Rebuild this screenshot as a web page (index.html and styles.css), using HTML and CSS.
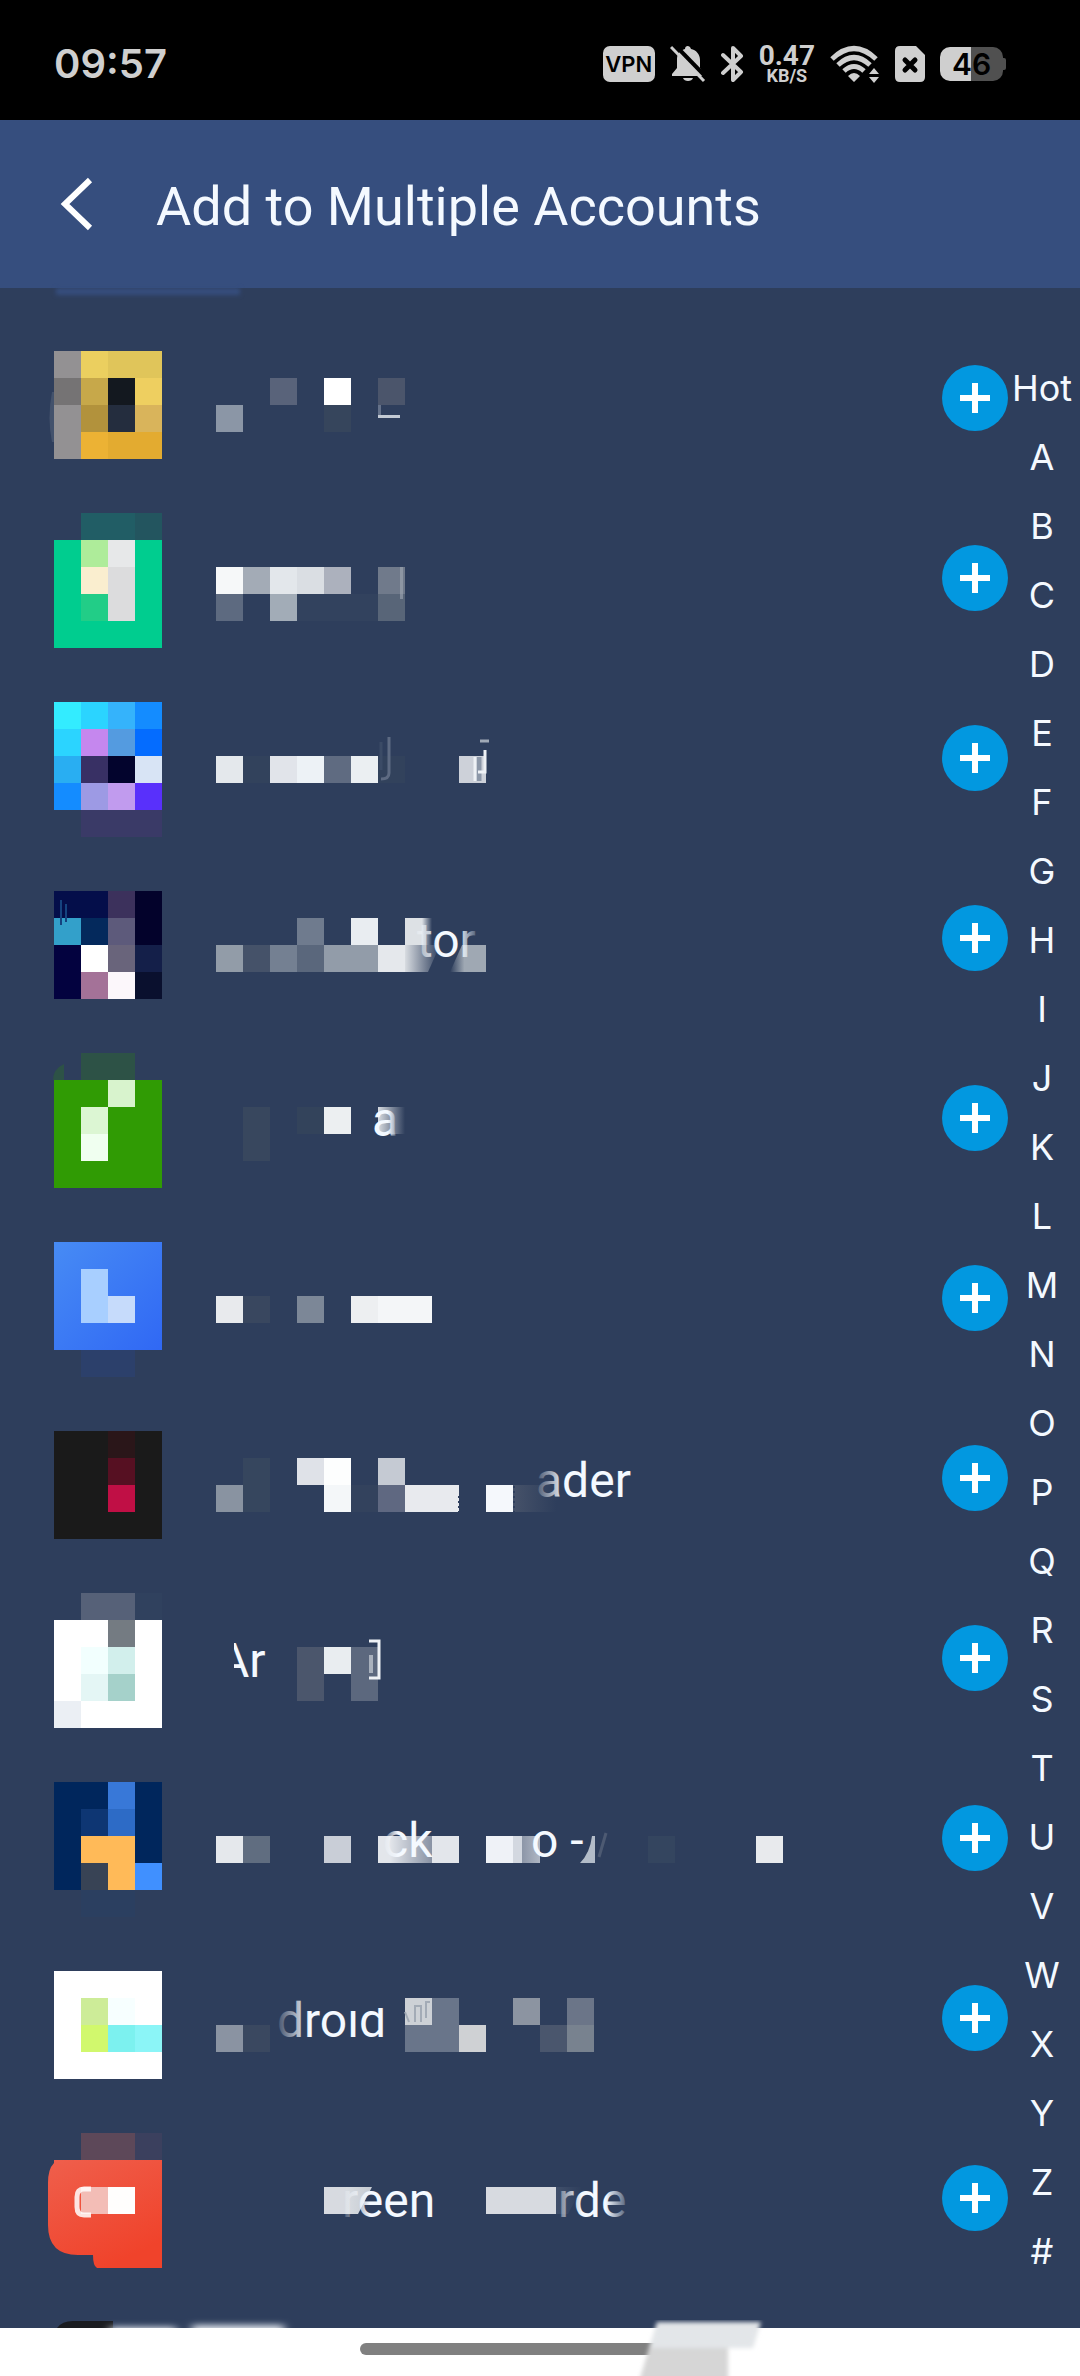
FILE: index.html
```html
<!DOCTYPE html>
<html lang="en">
<head>
<meta charset="utf-8">
<meta name="viewport" content="width=device-width, initial-scale=1">
<title>Add to Multiple Accounts</title>
<link rel="stylesheet" href="styles.css">
</head>
<body>
<svg class="defs" aria-hidden="true">
  <defs>
    <linearGradient id="fade-start"><stop offset="0" stop-color="#f4f9ff" stop-opacity="0.1"/><stop offset="0.3" stop-color="#f4f9ff"/></linearGradient>
    <linearGradient id="fade-end"><stop offset="0.6" stop-color="#f4f9ff"/><stop offset="1" stop-color="#f4f9ff" stop-opacity="0.1"/></linearGradient>
    <linearGradient id="fade-both"><stop offset="0" stop-color="#f4f9ff" stop-opacity="0.3"/><stop offset="0.35" stop-color="#f4f9ff"/><stop offset="0.7" stop-color="#f4f9ff"/><stop offset="1" stop-color="#f4f9ff" stop-opacity="0.2"/></linearGradient>
    <linearGradient id="block-out"><stop offset="0" stop-color="#d8dce1"/><stop offset="1" stop-color="#d8dce1" stop-opacity="0"/></linearGradient>
    <linearGradient id="slate-out"><stop offset="0" stop-color="#465269"/><stop offset="1" stop-color="#465269" stop-opacity="0"/></linearGradient>
    <linearGradient id="grey-in"><stop offset="0" stop-color="#9fa8b3" stop-opacity="0"/><stop offset="0.4" stop-color="#9fa8b3"/></linearGradient>
    <linearGradient id="shade"><stop offset="0" stop-color="#2e3e5c" stop-opacity="0"/><stop offset="0.5" stop-color="#2e3e5c"/><stop offset="1" stop-color="#2e3e5c" stop-opacity="0"/></linearGradient>
    <linearGradient id="coral" x2="0.5" y2="1"><stop offset="0" stop-color="#ef5f4c"/><stop offset="1" stop-color="#f0432b"/></linearGradient>
    <linearGradient id="blue" x2="1" y2="1"><stop offset="0" stop-color="#478bf4"/><stop offset="1" stop-color="#3068f4"/></linearGradient>
    <filter id="soft" x="-20%" y="-100%" width="140%" height="300%"><feGaussianBlur stdDeviation="5 3"/></filter>
    <filter id="edge"><feGaussianBlur stdDeviation="2"/></filter>
    <symbol id="plus" viewBox="0 0 66 66"><path d="M18 33h30M33 18v30" stroke="#fff" stroke-width="6"/></symbol>
  </defs>
</svg>

<header class="status">
  <time class="clock">09:57</time>
  <div class="indicators">
    <span class="vpn">VPN</span>
    <svg width="36" height="38" viewBox="0 0 36 38" aria-label="Muted"><path d="M2 31v-2l5-6V14C7 8 11 5 15 4c0-4 5-4 6 0 5 1 9 5 9 11v8l4 6v2z" fill="#cfcfcf"/><path d="M13 33h10c-1 4-9 4-10 0z" fill="#cfcfcf"/><path d="M5 0l32 33" stroke="#000" stroke-width="4"/><path d="M1 2l33 34" stroke="#cfcfcf" stroke-width="3"/></svg>
    <svg width="23" height="38" viewBox="0 0 23 38" aria-label="Bluetooth"><path d="M2 10l18 17-8 8V3l8 8L2 28" fill="none" stroke="#cfcfcf" stroke-width="4" stroke-linejoin="round" stroke-linecap="round"/></svg>
    <span class="speed"><b>0.47</b><small>KB/S</small></span>
    <svg width="50" height="38" viewBox="0 0 50 38" aria-label="Wi-Fi"><g fill="none" stroke="#cfcfcf" stroke-width="5"><path d="M2 14Q24-7 46 14"/><path d="M8 20Q24 5 40 20"/><path d="M14 26Q24 17 34 26"/></g><path d="M18 31q6-6 12 0l-6 6zM39 29l5-6 5 6zM39 32h10l-5 6z" fill="#cfcfcf"/></svg>
    <svg width="30" height="38" viewBox="0 0 30 38" aria-label="No SIM"><path d="M5 1h16l9 9v22q0 5-5 5H5q-5 0-5-5V6q0-5 5-5z" fill="#cfcfcf"/><path d="M10 15l10 10M20 15L10 25" stroke="#000" stroke-width="5" stroke-linecap="round"/></svg>
    <span class="battery">46</span>
  </div>
</header>

<header class="toolbar">
  <button class="back" aria-label="Back"><svg width="34" height="56" viewBox="0 0 34 56"><path d="M30 4L5 28l25 24" fill="none" stroke="#fff" stroke-width="6"/></svg></button>
  <h1>Add to Multiple Accounts</h1>
</header>

<main class="content">
  <div class="tab-edge"></div>
  <ul class="apps">
    <li class="app">
      <svg class="icon" viewBox="36 308 144 180"><path d="M52 392q-5 26 0 50h2v-50z" fill="#43526c"/><g transform="scale(27)">
        <path d="M2 13h1v4H2z" fill="#939193"/><path d="M2 14h1v1H2z" fill="#757374"/><path d="M3 13h1v1H3z" fill="#ebcf5f"/><path d="M4 13h2v1H4z" fill="#e0c55a"/><path d="M3 14h1v1H3z" fill="#c7a84a"/><path d="M4 14h1v1H4z" fill="#13181f"/><path d="M5 14h1v1H5z" fill="#eecf60"/><path d="M3 15h1v1H3z" fill="#b2923c"/><path d="M4 15h1v1H4z" fill="#242d3e"/><path d="M5 15h1v1H5z" fill="#d9b45b"/><path d="M3 16h1v1H3z" fill="#ecb234"/><path d="M4 16h2v1H4z" fill="#e3ab30"/></g></svg>
      <svg class="name" viewBox="180 308 640 180"><g transform="scale(27)"><path d="M8 15h1v1H8z" fill="#8b96a6"/><path d="M10 14h1v1h-1z" fill="#59637a"/><path d="M12 14h1v1h-1z" fill="#fff"/><path d="M12 15h1v1h-1z" fill="#36455c"/><path d="M14 14h1v1h-1z" fill="#4b556b"/></g><path d="M378 415h22v3h-22z" fill="#c3cad4"/><path d="M378 405h3v10h-3z" fill="#65728a"/></svg>
      <button class="add" aria-label="Add"><svg><use href="#plus"/></svg></button>
    </li>
    <li class="app">
      <svg class="icon" viewBox="36 488 144 180"><g transform="scale(27)"><path d="M3 19h2v1H3z" fill="#215d65"/><path d="M5 19h1v1H5z" fill="#23555f"/><path d="M2 20h4v4H2z" fill="#00cd8f"/><path d="M3 20h1v1H3z" fill="#aeec9a"/><path d="M4 20h1v1H4z" fill="#e7e8e9"/><path d="M3 21h1v1H3z" fill="#faeecf"/><path d="M4 21h1v2H4z" fill="#dcdcdd"/><path d="M3 22h1v1H3z" fill="#22cd87"/></g></svg>
      <svg class="name" viewBox="180 488 640 180"><g transform="scale(27)"><path d="M8 21h1v1H8z" fill="#f6f8f9"/><path d="M9 21h1v1H9z" fill="#a3abb6"/><path d="M10 21h1v1h-1z" fill="#e3e7eb"/><path d="M11 21h1v1h-1z" fill="#dadee3"/><path d="M12 21h1v1h-1z" fill="#acb1bd"/><path d="M14 21h1v1h-1z" fill="#707a8b"/><path d="M8 22h1v1H8z" fill="#5d6a80"/><path d="M10 22h1v1h-1z" fill="#a2acb7"/><path d="M11 22h3v1h-3z" fill="#32425e"/><path d="M14 22h1v1h-1z" fill="#586578"/></g><path d="M400 567h3v32h-3z" fill="#a0a8b4" opacity=".6"/></svg>
      <button class="add" aria-label="Add"><svg><use href="#plus"/></svg></button>
    </li>
    <li class="app">
      <svg class="icon" viewBox="36 668 144 180"><g transform="scale(27)"><path d="M2 26h1v1H2z" fill="#33ecff"/><path d="M3 26h1v1H3zM2 27h1v1H2z" fill="#2bd4ff"/><path d="M4 26h1v1H4z" fill="#35b3fb"/><path d="M5 26h1v1H5zM2 29h1v1H2z" fill="#148cff"/><path d="M3 27h1v1H3z" fill="#c587ee"/><path d="M4 27h1v1H4z" fill="#549be0"/><path d="M5 27h1v1H5z" fill="#046cff"/><path d="M2 28h1v1H2z" fill="#29aef2"/><path d="M3 28h1v1H3z" fill="#383064"/><path d="M4 28h1v1H4z" fill="#03042d"/><path d="M5 28h1v1H5z" fill="#d8e4f5"/><path d="M3 29h1v1H3z" fill="#9d9ae4"/><path d="M4 29h1v1H4z" fill="#c19bee"/><path d="M5 29h1v1H5z" fill="#5930fb"/><path d="M3 30h3v1H3z" fill="#3a3a67"/></g></svg>
      <svg class="name" viewBox="180 668 640 180"><g transform="scale(27)"><path d="M8 28h1v1H8z" fill="#e4e8ec"/><path d="M9 28h1v1H9zM14 28h1v1h-1z" fill="#32425c"/><path d="M10 28h1v1h-1z" fill="#e1e4ea"/><path d="M11 28h1v1h-1z" fill="#edf2f6"/><path d="M12 28h1v1h-1z" fill="#5f6b81"/><path d="M13 28h1v1h-1z" fill="#ebeff2"/><path d="M17 28h1v1h-1z" fill="#cdd1d9"/></g><path d="M389 737v36q0 6-8 6" fill="none" stroke="#5d6a82" stroke-width="3"/><path d="M381 742v28" stroke="#3b4b66" stroke-width="3"/><path d="M479 757v24" stroke="#8c97a8" stroke-width="5"/><path d="M475 757v24M485 750v22h-7" fill="none" stroke="#eef1f5" stroke-width="3"/><path d="M480 741h9" stroke="#a0a9b6" stroke-width="3"/></svg>
      <button class="add" aria-label="Add"><svg><use href="#plus"/></svg></button>
    </li>
    <li class="app">
      <svg class="icon" viewBox="36 848 144 180"><g transform="scale(27)"><path d="M2 33h2v1H2z" fill="#040e4a"/><path d="M4 33h1v1H4z" fill="#3c315c"/><path d="M5 33h1v2H5z" fill="#03022b"/><path d="M2 34h1v1H2z" fill="#33a0ca"/><path d="M3 34h1v1H3z" fill="#04295c"/><path d="M4 34h1v1H4z" fill="#5d5a7b"/><path d="M2 35h1v2H2z" fill="#03023f"/><path d="M3 35h1v1H3z" fill="#fff"/><path d="M4 35h1v1H4z" fill="#69647b"/><path d="M5 35h1v1H5z" fill="#141f49"/><path d="M3 36h1v1H3z" fill="#a47298"/><path d="M4 36h1v1H4z" fill="#fcf7fb"/><path d="M5 36h1v1H5z" fill="#0a102e"/></g><path d="M61 900v25M66 904v18" stroke="#15437f" stroke-width="2"/></svg>
      <svg class="name" viewBox="180 848 640 180"><g transform="scale(27)"><path d="M11 34h1v1h-1z" fill="#6f7b8e"/><path d="M13 34h1v1h-1z" fill="#e9edf1"/><path d="M15 34h1v1h-1z" fill="#dde1e5"/><path d="M8 35h1v1H8z" fill="#929ca8"/><path d="M9 35h1v1H9z" fill="#455269"/><path d="M10 35h1v1h-1z" fill="#748092"/><path d="M11 35h1v1h-1z" fill="#5a677c"/><path d="M12 35h2v1h-2z" fill="#929ca9"/><path d="M14 35h1v1h-1z" fill="#e5e8ec"/></g><path d="M405 945h35l-12 27h-23z" fill="url(#block-out)"/><path d="M450 972l12-27h24v27z" fill="url(#grey-in)"/><path d="M422 918h20v27h-20z" fill="url(#shade)"/><text x="417" y="957" fill="url(#fade-both)">tor</text></svg>
      <button class="add" aria-label="Add"><svg><use href="#plus"/></svg></button>
    </li>
    <li class="app">
      <svg class="icon" viewBox="36 1028 144 180"><path d="M53 1080q0-11 11-16v16z" fill="#2d5246"/><g transform="scale(27)"><path d="M3 39h2v1H3z" fill="#2d5246"/><path d="M2 40h4v4H2z" fill="#309b04"/><path d="M4 40h1v1H4z" fill="#d8f3cd"/><path d="M3 41h1v1H3z" fill="#dcf6d3"/><path d="M3 42h1v1H3z" fill="#f0fff0"/></g></svg>
      <svg class="name" viewBox="180 1028 640 180"><g transform="scale(27)"><path d="M9 41h1v2H9z" fill="#38475e"/><path d="M11 41h1v1h-1z" fill="#33435b"/><path d="M12 41h1v1h-1z" fill="#eceff1"/><path d="M14 41h1v1h-1z" fill="url(#block-out)"/></g><text x="372" y="1136" fill="url(#fade-end)">a</text></svg>
      <button class="add" aria-label="Add"><svg><use href="#plus"/></svg></button>
    </li>
    <li class="app">
      <svg class="icon" viewBox="36 1208 144 180"><g transform="scale(27)"><path d="M2 46h4v4H2z" fill="url(#blue)"/><path d="M3 47h1v2H3z" fill="#a8cfff"/><path d="M4 48h1v1H4z" fill="#c6dbfb"/><path d="M3 50h2v1H3z" fill="#2c406b"/></g></svg>
      <svg class="name" viewBox="180 1208 640 180"><g transform="scale(27)"><path d="M8 48h1v1H8z" fill="#e8eaed"/><path d="M9 48h1v1H9z" fill="#39475f"/><path d="M11 48h1v1h-1z" fill="#7c8797"/><path d="M13 48h1v1h-1z" fill="#edeff1"/><path d="M14 48h2v1h-2z" fill="#f4f6f8"/></g></svg>
      <button class="add" aria-label="Add"><svg><use href="#plus"/></svg></button>
    </li>
    <li class="app">
      <svg class="icon" viewBox="36 1388 144 180"><g transform="scale(27)"><path d="M2 53h4v4H2z" fill="#1a1a1a"/><path d="M4 53h1v1H4z" fill="#2a1619"/><path d="M4 54h1v1H4z" fill="#561022"/><path d="M4 55h1v1H4z" fill="#c00f45"/></g></svg>
      <svg class="name" viewBox="180 1388 640 180"><g transform="scale(27)"><path d="M8 55h1v1H8z" fill="#8993a1"/><path d="M9 54h1v2H9z" fill="#36465e"/><path d="M11 54h1v1h-1z" fill="#dfe2e8"/><path d="M12 54h1v1h-1z" fill="#fdfefe"/><path d="M12 55h1v1h-1z" fill="#f4f7f9"/><path d="M13 55h1v1h-1z" fill="#33425d"/><path d="M14 54h1v1h-1z" fill="#c5cad3"/><path d="M14 55h1v1h-1z" fill="#5f6881"/><path d="M15 55h2v1h-2z" fill="#e8eaee"/><path d="M18 55h1v1h-1z" fill="#f5f8fc"/><path d="M19 55h1.6v1H19z" fill="url(#slate-out)"/></g><path d="M459 1496v16M514 1486v26" stroke="#2e3e5c" stroke-width="2" stroke-dasharray="2 3"/><text x="536" y="1497" fill="url(#fade-start)">ader</text></svg>
      <button class="add" aria-label="Add"><svg><use href="#plus"/></svg></button>
    </li>
    <li class="app">
      <svg class="icon" viewBox="36 1568 144 180"><g transform="scale(27)"><path d="M3 59h2v1H3z" fill="#566178"/><path d="M5 59h1v1H5z" fill="#30415e"/><path d="M2 60h4v4H2z" fill="#fff"/><path d="M4 60h1v1H4z" fill="#747b82"/><path d="M3 61h1v1H3z" fill="#f2fffe"/><path d="M4 61h1v1H4z" fill="#d2efec"/><path d="M3 62h1v1H3z" fill="#e4f6f5"/><path d="M4 62h1v1H4z" fill="#a5d1ca"/><path d="M2 63h1v1H2z" fill="#ebeff4"/></g></svg>
      <svg class="name" viewBox="180 1568 640 180"><g transform="scale(27)"><path d="M11 61h1v2h-1z" fill="#4b566c"/><path d="M12 61h1v1h-1z" fill="#e9edf0"/><path d="M13 61h1v2h-1z" fill="#5c687e"/></g><text x="218" y="1677" fill="url(#fade-start)">Ar</text><path d="M216 1635h18v50h-18z" fill="#2e3e5c"/><path d="M369 1641h10v37h-10" fill="none" stroke="#eef1f5" stroke-width="3"/><path d="M371 1655v18" stroke="#a9b1bd" stroke-width="4"/></svg>
      <button class="add" aria-label="Add"><svg><use href="#plus"/></svg></button>
    </li>
    <li class="app">
      <svg class="icon" viewBox="36 1748 144 180"><g transform="scale(27)"><path d="M2 66h4v4H2z" fill="#00265c"/><path d="M4 66h1v1H4z" fill="#3878d8"/><path d="M3 67h1v1H3z" fill="#0e3673"/><path d="M4 67h1v1H4z" fill="#2d6bc6"/><path d="M3 68h2v1H3zM4 69h1v1H4z" fill="#ffba58"/><path d="M3 69h1v1H3z" fill="#384355"/><path d="M5 69h1v1H5z" fill="#4090ff"/><path d="M3 70h2v1H3z" fill="#2b3f60"/></g></svg>
      <svg class="name" viewBox="180 1748 640 180"><g transform="scale(27)"><path d="M8 68h1v1H8z" fill="#e5e8ec"/><path d="M9 68h1v1H9z" fill="#606d80"/><path d="M12 68h1v1h-1z" fill="#c9ced7"/><path d="M14 68h3v1h-3z" fill="#e3e6eb"/><path d="M18 68h1v1h-1z" fill="#eff2f7"/><path d="M19 68h1v1h-1z" fill="#d3d8e0"/><path d="M24 68h1v1h-1z" fill="#34455f"/><path d="M28 68h1v1h-1z" fill="#e8eaed"/></g><path d="M390 1836h42v27h-42zM522 1836h36v27h-36z" fill="url(#shade)"/><text x="383" y="1857" fill="url(#fade-start)">ck</text><text x="531" y="1857">o -</text><path d="M580 1863q10-10 12-27h3v27z" fill="#b3bcc8"/><path d="M599 1857l7-24" stroke="#4d5a72" stroke-width="3"/></svg>
      <button class="add" aria-label="Add"><svg><use href="#plus"/></svg></button>
    </li>
    <li class="app">
      <svg class="icon" viewBox="36 1928 144 180"><g transform="scale(27)"><path d="M2 73h4v4H2z" fill="#fff"/><path d="M3 74h1v1H3z" fill="#cdec98"/><path d="M4 74h1v1H4z" fill="#f7ffff"/><path d="M3 75h1v1H3z" fill="#d1f86d"/><path d="M4 75h1v1H4z" fill="#7cf1ef"/><path d="M5 75h1v1H5z" fill="#8bf5f7"/></g></svg>
      <svg class="name" viewBox="180 1928 640 180"><g transform="scale(27)"><path d="M8 75h1v1H8z" fill="#8a93a2"/><path d="M9 75h1v1H9z" fill="#3a4860"/><path d="M15 74h1v1h-1z" fill="#cdd1d6"/><path d="M16 74h1v2h-2v-1h1z" fill="#69758a"/><path d="M17 75h1v1h-1z" fill="#cfd1d4"/><path d="M19 74h1v1h-1z" fill="#8c94a1"/><path d="M20 75h1v1h-1z" fill="#4a566d"/><path d="M21 74h1v1h-1z" fill="#6b7588"/><path d="M21 75h1v1h-1z" fill="#78828f"/></g><path d="M415 2022v-16h6v16M426 2018v-16h4M409 2022l-4-10" fill="none" stroke="#a3abb6" stroke-width="2"/><text x="277" y="2037" fill="url(#fade-start)">droid</text><path d="M350 1994h36v14h-36z" fill="#2e3e5c"/></svg>
      <button class="add" aria-label="Add"><svg><use href="#plus"/></svg></button>
    </li>
    <li class="app">
      <svg class="icon" viewBox="36 2108 144 180"><g transform="scale(27)"><path d="M3 79h2v1H3z" fill="#5d4859"/><path d="M5 79h1v1H5z" fill="#3b405e"/></g><path d="M54 2160h108v108H97q-4-2-4-13H78q-30 0-30-30v-42q0-14 6-20z" fill="url(#coral)"/><path d="M81 2187h27v27H81z" fill="#f3bdb6"/><path d="M108 2187h27v27h-27z" fill="#fffefd"/><path d="M91 2189H84q-7 0-7 8v10q0 8 7 8h7" fill="none" stroke="#fff" stroke-width="5" opacity=".85"/></svg>
      <svg class="name" viewBox="180 2108 640 180"><path d="M324 2187h22v27h-22zM486 2187h70v27h-70z" fill="#d7dae0"/><path d="M346 2187h26l-14 27h-12zM556 2187h26l-14 27h-12z" fill="url(#block-out)"/><text x="342" y="2217" fill="url(#fade-start)">reen</text><text x="558" y="2217" fill="url(#fade-both)">rde</text></svg>
      <button class="add" aria-label="Add"><svg><use href="#plus"/></svg></button>
    </li>
    <li class="app app-cut">
      <svg class="cut-art" width="800" height="40" viewBox="0 2288 800 40"><path d="M57 2328q5-7 16-7h40v7z" fill="#1a1c20"/><g fill="#dfe4ec" filter="url(#soft)"><path d="M110 2327h66v10h-66zM192 2325h92v12h-92z"/></g></svg>
    </li>
  </ul>
  <nav class="letters" aria-label="Index">
    <a href="#">Hot</a><a href="#">A</a><a href="#">B</a><a href="#">C</a><a href="#">D</a><a href="#">E</a><a href="#">F</a><a href="#">G</a><a href="#">H</a><a href="#">I</a><a href="#">J</a><a href="#">K</a><a href="#">L</a><a href="#">M</a><a href="#">N</a><a href="#">O</a><a href="#">P</a><a href="#">Q</a><a href="#">R</a><a href="#">S</a><a href="#">T</a><a href="#">U</a><a href="#">V</a><a href="#">W</a><a href="#">X</a><a href="#">Y</a><a href="#">Z</a><a href="#">#</a>
  </nav>
</main>

<footer class="gesture">
  <div class="pill"></div>
  <svg class="smear" width="140" height="56" viewBox="0 0 140 56"><g filter="url(#edge)"><path d="M20 2h104l-8 26H12z" fill="#e3e6e9"/><path d="M12 28h79v34H2z" fill="#d6d6d6"/></g></svg>
</footer>
</body>
</html>
```
FILE: styles.css
```css
* { box-sizing: border-box; }

body {
  margin: 0;
  background: #fff;
  color: #f4f9ff;
  font-family: Roboto, "Liberation Sans", sans-serif;
}

button {
  padding: 0;
  border: 0;
  background: none;
  cursor: pointer;
}

svg { display: block; flex: none; }

.defs { position: absolute; width: 0; height: 0; }

.status {
  display: flex;
  align-items: center;
  justify-content: space-between;
  height: 120px;
  padding: 8px 74px 0 54px;
  background: #000;
  color: #cfcfcf;
}

.clock {
  font-family: Inter, sans-serif;
  font-size: 40px;
  font-weight: 600;
  line-height: 48px;
}

.indicators { display: flex; align-items: center; gap: 15px; }

.vpn {
  width: 52px;
  border-radius: 7px;
  background: #cfcfcf;
  color: #000;
  font-family: Inter, sans-serif;
  font-size: 22px;
  font-weight: 600;
  line-height: 36px;
  text-align: center;
}

.speed { display: grid; justify-items: center; }
.speed b { font-size: 28px; font-weight: 700; line-height: 24px; }
.speed small { font-size: 18px; font-weight: 700; line-height: 16px; }

.battery {
  position: relative;
  width: 63px;
  margin-right: 3px;
  border-radius: 10px;
  background: linear-gradient(90deg, #cfcfcf 50%, #505050 50%);
  color: #000;
  font-family: Inter, sans-serif;
  font-size: 30px;
  font-weight: 600;
  line-height: 34px;
  text-align: center;
}

.battery::after {
  content: "";
  position: absolute;
  top: 11px;
  right: -3px;
  width: 3px;
  height: 12px;
  border-radius: 0 2px 2px 0;
  background: #505050;
}

.toolbar {
  display: flex;
  align-items: center;
  gap: 62px;
  height: 168px;
  padding: 0 60px;
  background: #364e7e;
}

.toolbar h1 {
  margin: 0;
  padding-top: 6px;
  font-size: 54px;
  font-weight: 400;
  line-height: 64px;
}

.content {
  position: relative;
  display: flex;
  background: #2e3e5c;
}

.tab-edge {
  position: absolute;
  top: 0;
  left: 56px;
  width: 184px;
  height: 7px;
  background: #364e7e;
  filter: blur(2px);
}

.apps {
  flex: 1;
  min-width: 0;
  margin: 0;
  padding: 20px 0 0;
  list-style: none;
}

.app {
  display: flex;
  align-items: center;
  height: 180px;
  padding-left: 36px;
}

.app-cut { height: 40px; padding: 0; overflow: hidden; }

.icon { width: 144px; height: 180px; }
.name { width: 640px; height: 180px; }

.name text { font-size: 48px; }
.name text:not([fill]) { fill: #f4f9ff; }

.add {
  width: 66px;
  height: 66px;
  margin-left: auto;
  border-radius: 50%;
  background: #0298e0;
}

.add svg { width: 66px; height: 66px; }

.letters {
  display: flex;
  flex-direction: column;
  width: 72px;
  padding: 66px 4px 0 0;
}

.letters a {
  color: inherit;
  font-family: Inter, sans-serif;
  font-size: 36px;
  line-height: 69px;
  text-align: center;
  text-decoration: none;
}

.gesture {
  position: relative;
  display: flex;
  justify-content: center;
  height: 48px;
  padding-top: 15px;
  background: #fff;
}

.pill {
  width: 360px;
  height: 12px;
  border-radius: 6px;
  background: #808080;
}

.smear {
  position: absolute;
  top: -8px;
  left: 59%;
}
```
